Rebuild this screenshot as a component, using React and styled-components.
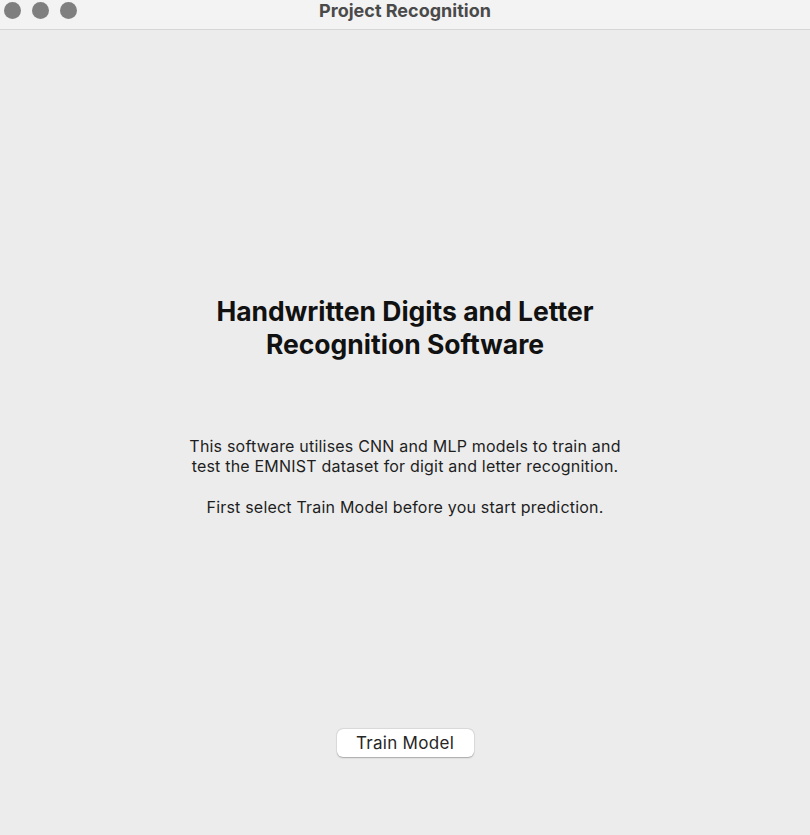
import React from 'react';
import styled, { createGlobalStyle } from 'styled-components';

const GlobalStyle = createGlobalStyle`
  html, body {
    margin: 0;
    padding: 0;
    background: #ececec;
  }
  body {
    font-family: Inter, "Liberation Sans", Arial, sans-serif;
    -webkit-font-smoothing: antialiased;
  }
`;

const Window = styled.div`
  width: 810px;
  height: 835px;
  display: flex;
  flex-direction: column;
  background: #ececec;
  overflow: hidden;
`;

const TitleBar = styled.div`
  position: relative;
  height: 29px;
  flex-shrink: 0;
  display: flex;
  align-items: center;
  justify-content: center;
  background: #f3f3f3;
  border-bottom: 1px solid #d6d6d6;
`;

const Lights = styled.div`
  position: absolute;
  left: 4px;
  top: 2px;
  display: flex;
  gap: 11px;
`;

const Light = styled.span`
  width: 17px;
  height: 17px;
  border-radius: 50%;
  background: #7f7f7f;
`;

const Title = styled.div`
  font-size: 18px;
  font-weight: 700;
  color: #4a4a4a;
  margin-top: -8px;
`;

const Body = styled.main`
  flex: 1;
  display: flex;
  flex-direction: column;
  align-items: center;
  padding-top: 265px;
`;

const Heading = styled.h1`
  margin: 0;
  font-size: 26.5px;
  line-height: 33px;
  font-weight: 700;
  color: #111;
  text-align: center;
`;

const Paragraph = styled.p`
  margin: ${p => p.$top}px 0 0;
  font-size: 16px;
  line-height: 20px;
  color: #1e1e1e;
  text-align: center;
  letter-spacing: 0.2px;
`;

const Button = styled.button`
  margin-top: 212px;
  width: 137px;
  height: 28px;
  border: none;
  border-radius: 6px;
  background: #ffffff;
  box-shadow: 0 0.5px 1.5px rgba(0, 0, 0, 0.28), 0 0 0 0.5px rgba(0, 0, 0, 0.06);
  font-family: inherit;
  font-size: 17px;
  letter-spacing: 0.3px;
  color: #262626;
  padding: 0;
  cursor: pointer;
`;

export default function App() {
  return (
    <>
      <GlobalStyle />
      <Window>
        <TitleBar>
          <Lights>
            <Light />
            <Light />
            <Light />
          </Lights>
          <Title>Project Recognition</Title>
        </TitleBar>
        <Body>
          <Heading>
            Handwritten Digits and Letter
            <br />
            Recognition Software
          </Heading>
          <Paragraph $top={75}>
            This software utilises CNN and MLP models to train and
            <br />
            test the EMNIST dataset for digit and letter recognition.
          </Paragraph>
          <Paragraph $top={21}>First select Train Model before you start prediction.</Paragraph>
          <Button>Train Model</Button>
        </Body>
      </Window>
    </>
  );
}
